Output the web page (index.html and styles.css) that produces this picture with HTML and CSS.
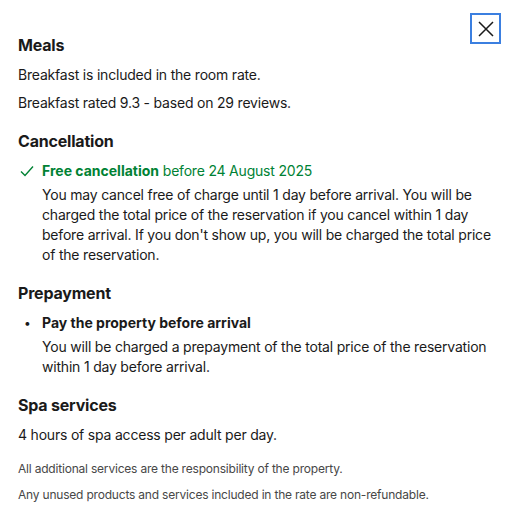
FILE: index.html
```html
<!DOCTYPE html>
<html>
<head>
  <link rel="stylesheet" href="styles.css">
</head>
<body>

<div class="panel">
  <button class="close" aria-label="Close">
    <svg width="16" height="16" viewBox="0 0 16 16"><path d="M1 1L15 15M15 1L1 15" stroke="#1a1a1a" stroke-width="1.5" fill="none"/></svg>
  </button>

  <section class="block">
    <h3>Meals</h3>
    <p>Breakfast is included in the room rate.</p>
    <p>Breakfast rated 9.3 - based on 29 reviews.</p>
  </section>

  <section class="block">
    <h3>Cancellation</h3>
    <div class="item">
      <div class="item-head green">
        <span class="mark">
          <svg width="14" height="12" viewBox="0 0 14 12"><path d="M1 6.5L5 10.5L13 1.5" stroke="#008234" stroke-width="1.4" fill="none"/></svg>
        </span>
        <span><b>Free cancellation</b> before 24 August 2025</span>
      </div>
      <p class="item-text">You may cancel free of charge until 1 day before arrival. You will be charged the total price of the reservation if you cancel within 1 day before arrival. If you don't show up, you will be charged the total price of the reservation.</p>
    </div>
  </section>

  <section class="block">
    <h3>Prepayment</h3>
    <div class="item">
      <div class="item-head">
        <span class="mark bullet">&bull;</span>
        <span><b>Pay the property before arrival</b></span>
      </div>
      <p class="item-text">You will be charged a prepayment of the total price of the reservation within 1 day before arrival.</p>
    </div>
  </section>

  <section class="block">
    <h3>Spa services</h3>
    <p>4 hours of spa access per adult per day.</p>
  </section>

  <div class="notes">
    <p>All additional services are the responsibility of the property.</p>
    <p>Any unused products and services included in the rate are non-refundable.</p>
  </div>
</div>

</body>
</html>
```

FILE: styles.css
```css
body {
  margin: 0;
  font-family: Inter, "Noto Sans", sans-serif;
  color: #1a1a1a;
  background: #fff;
  letter-spacing: -0.2px;
}
.panel {
  position: relative;
  padding: 33px 18px 20px 18px;
  display: flex;
  flex-direction: column;
  gap: 16px;
}
.close {
  position: absolute;
  top: 13px;
  right: 10px;
  width: 31px;
  height: 31px;
  border: 2px solid #3b7fe0;
  background: #fff;
  padding: 0;
  display: flex;
  align-items: center;
  justify-content: center;
}
.block {
  display: flex;
  flex-direction: column;
  gap: 8px;
}
h3 {
  margin: 0;
  font-size: 16px;
  line-height: 24px;
  font-weight: 700;
}
p {
  margin: 0;
  font-size: 14px;
  line-height: 20px;
}
.item {
  display: flex;
  flex-direction: column;
  gap: 4px;
}
.item-head {
  display: flex;
  font-size: 14px;
  line-height: 20px;
}
.item-head b {
  font-weight: 700;
  letter-spacing: 0;
}
.green {
  color: #008234;
}
.mark {
  width: 24px;
  display: flex;
  align-items: center;
  justify-content: flex-start;
  padding-left: 2px;
  box-sizing: border-box;
}
.bullet {
  padding-left: 6px;
  font-size: 12px;
}
.item-text {
  padding-left: 24px;
}
.notes {
  margin-top: -1px;
  display: flex;
  flex-direction: column;
  gap: 8px;
  color: #474747;
}
.notes p {
  font-size: 12px;
  line-height: 18px;
}
```
